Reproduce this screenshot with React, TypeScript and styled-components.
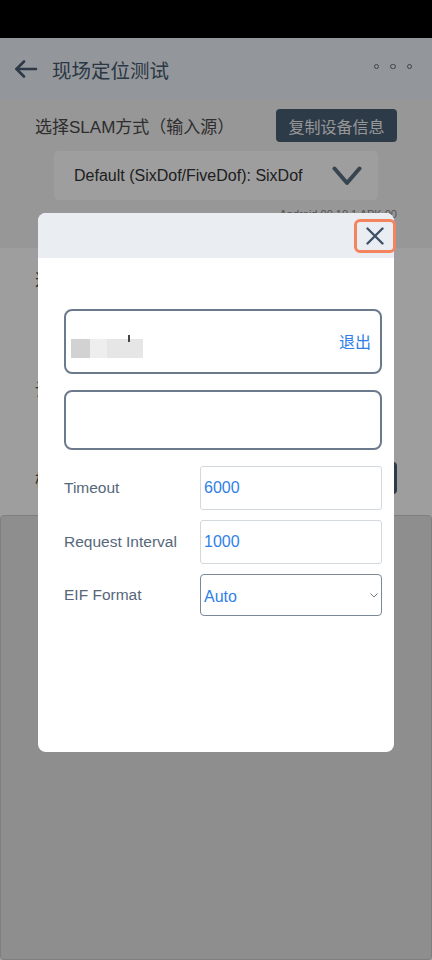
import styled, { createGlobalStyle } from 'styled-components';

const GlobalStyle = createGlobalStyle`
  html, body {
    margin: 0;
    padding: 0;
    background: #000;
  }
  body {
    font-family: "Liberation Sans", "Noto Sans CJK SC", Arial, sans-serif;
  }
`;

const fieldData = [
    { id: 1, label: 'Timeout', value: '6000' },
    { id: 2, label: 'Request Interval', value: '1000' },
];

const Page = styled.div`
  width: 432px;
  min-height: 960px;
  display: flex;
  flex-direction: column;
  background: #ffffff;
`;

const StatusBar = styled.div`
  height: 38px;
  background: #000;
`;

const Header = styled.div`
  height: 62px;
  background: #eef3f8;
  display: flex;
  align-items: center;
  padding: 0 20px 0 14px;
  box-sizing: border-box;
`;

const Title = styled.h1`
  margin: 0 0 0 14px;
  font-size: 19.5px;
  font-weight: 400;
  color: #46596e;
  font-family: "Noto Sans CJK SC", sans-serif;
  flex: 1;
`;

const Dots = styled.div`
  display: flex;
  gap: 11px;
  margin-top: -5px;
`;

const Dot = styled.span`
  width: 3.5px;
  height: 3.5px;
  border: 1.2px solid #5d6c7c;
  border-radius: 50%;
`;

const SlamSection = styled.section`
  height: 148px;
  background: #f4f4f4;
  padding: 9px 35px 0 35px;
  box-sizing: border-box;
`;

const SlamRow = styled.div`
  display: flex;
  align-items: center;
  justify-content: space-between;
  height: 33px;
`;

const SlamLabel = styled.span`
  font-size: 17px;
  color: #4b4b4b;
  font-family: "Liberation Sans", "Noto Sans CJK SC", sans-serif;
`;

const CopyButton = styled.button`
  height: 33px;
  width: 121px;
  border: none;
  border-radius: 4px;
  background: #4a6077;
  color: #f2f2f2;
  font-size: 16px;
  font-family: "Noto Sans CJK SC", sans-serif;
  padding: 0;
`;

const SlamSelect = styled.div`
  margin: 9px 0 0 19px;
  width: 324px;
  height: 49px;
  background: #ffffff;
  border-radius: 5px;
  display: flex;
  align-items: center;
  justify-content: space-between;
  padding: 0 16px 0 20px;
  box-sizing: border-box;
  font-size: 16px;
  color: #333;
`;

const Version = styled.div`
  margin: 8px 0 0 0;
  text-align: right;
  font-size: 11px;
  color: #888;
`;

const OptionsSection = styled.section`
  height: 267px;
  background: #ffffff;
  padding: 18px 35px 0 35px;
  box-sizing: border-box;
  display: flex;
  flex-direction: column;
`;

const OptionRow = styled.div<{ $top: number }>`
  margin-top: ${p => p.$top}px;
  height: 24px;
  display: flex;
  align-items: center;
  justify-content: space-between;
  font-size: 17px;
  color: #444;
  font-family: "Noto Sans CJK SC", sans-serif;
`;

const DarkButton = styled.span`
  width: 60px;
  height: 32px;
  border-radius: 4px;
  background: #4a6077;
`;

const LogPanel = styled.div`
  flex: 1;
  background: #e6e6e6;
  border: 1px solid #cdcdcd;
  border-radius: 4px;
`;

const Overlay = styled.div`
  position: fixed;
  inset: 0;
  top: 38px;
  background: rgba(0, 0, 0, 0.38);
  display: flex;
  justify-content: center;
  align-items: flex-start;
  padding-top: 175px;
  box-sizing: border-box;
`;

const Dialog = styled.div`
  width: 356px;
  height: 539px;
  background: #ffffff;
  border-radius: 8px;
`;

const DialogHead = styled.div`
  height: 45px;
  background: #eaeef3;
  border-radius: 8px 8px 0 0;
  display: flex;
  justify-content: flex-end;
  align-items: flex-start;
  padding-top: 6px;
  box-sizing: border-box;
`;

const CloseButton = styled.button`
  width: 42px;
  height: 34px;
  margin-right: -2px;
  border: 3px solid #f4845e;
  border-radius: 6px;
  background: transparent;
  display: flex;
  align-items: center;
  justify-content: center;
  padding: 0;
`;

const DialogBody = styled.div`
  padding: 51px 12px 0 26px;
  display: flex;
  flex-direction: column;
`;

const AccountBox = styled.div<{ $height: number; $top?: number }>`
  height: ${p => p.$height}px;
  margin-top: ${p => p.$top || 0}px;
  border: 2px solid #6b7b8d;
  border-radius: 8px;
  display: flex;
  align-items: center;
  justify-content: space-between;
  padding: 0 9px 0 5px;
  box-sizing: border-box;
`;

const Redacted = styled.div`
  display: flex;
  margin-top: 13px;
  height: 19px;
`;

const Blur = styled.span<{ $w: number; $c: string }>`
  position: relative;
  width: ${p => p.$w}px;
  background: ${p => p.$c};
`;

const Tick = styled.span`
  position: absolute;
  left: 21px;
  top: -4px;
  width: 1.5px;
  height: 7px;
  background: #444;
`;

const Logout = styled.span`
  font-size: 16px;
  color: #2f7fe8;
  font-family: "Noto Sans CJK SC", sans-serif;
  margin-top: -2px;
`;

const FieldRow = styled.div<{ $top: number }>`
  display: grid;
  grid-template-columns: 136px 1fr;
  align-items: center;
  margin-top: ${p => p.$top}px;
`;

const FieldLabel = styled.label`
  font-size: 15.5px;
  color: #56677a;
`;

const FieldInput = styled.input`
  height: 44px;
  border: 1px solid #d3d8dd;
  border-radius: 3px;
  padding: 0 3px;
  box-sizing: border-box;
  font-size: 16px;
  color: #2f7fe8;
  font-family: "Liberation Sans", Arial, sans-serif;
  outline: none;
  width: 100%;
`;

const SelectWrap = styled.div`
  position: relative;
  height: 42px;
`;

const FieldSelect = styled.select`
  appearance: none;
  -webkit-appearance: none;
  height: 42px;
  border: 1px solid #7b8898;
  border-radius: 4px;
  padding: 2px 0 0 3px;
  box-sizing: border-box;
  font-size: 16px;
  color: #2f7fe8;
  background: #fff;
  font-family: "Liberation Sans", Arial, sans-serif;
  width: 100%;
  outline: none;
`;

const SelectArrow = styled.svg`
  position: absolute;
  right: 4px;
  top: 19px;
  pointer-events: none;
`;

function BackArrow() {
    return (
        <svg width="24" height="24" viewBox="0 0 24 24" fill="none" stroke="#4a5d73" strokeWidth="2.6" strokeLinecap="round" strokeLinejoin="round">
            <path d="M22 12H2.5" />
            <path d="M10 4.5L2.5 12l7.5 7.5" />
        </svg>
    );
}

function BigChevron() {
    return (
        <svg width="30" height="20" viewBox="0 0 30 20" fill="none" stroke="#5c6f84" strokeWidth="4" strokeLinecap="round" strokeLinejoin="round">
            <path d="M2.5 2.5L15 17 27.5 2.5" />
        </svg>
    );
}

function CloseIcon() {
    return (
        <svg width="18" height="18" viewBox="0 0 18 18" fill="none" stroke="#3f5267" strokeWidth="2.4" strokeLinecap="round">
            <path d="M1.5 1.5l15 15M16.5 1.5l-15 15" />
        </svg>
    );
}

export default function App() {
    return (
        <>
            <GlobalStyle />
            <Page>
                <StatusBar />
                <Header>
                    <BackArrow />
                    <Title>现场定位测试</Title>
                    <Dots>
                        <Dot />
                        <Dot />
                        <Dot />
                    </Dots>
                </Header>

                <SlamSection>
                    <SlamRow>
                        <SlamLabel>选择SLAM方式（输入源）</SlamLabel>
                        <CopyButton>复制设备信息</CopyButton>
                    </SlamRow>
                    <SlamSelect>
                        <span>Default (SixDof/FiveDof): SixDof</span>
                        <BigChevron />
                    </SlamSelect>
                    <Version>Android 00.10.1 APK 00</Version>
                </SlamSection>

                <OptionsSection>
                    <OptionRow $top={0}>选择定位地图</OptionRow>
                    <OptionRow $top={86}>设置定位参数</OptionRow>
                    <OptionRow $top={66}>
                        <span>模式</span>
                        <DarkButton />
                    </OptionRow>
                </OptionsSection>

                <LogPanel />
            </Page>

            <Overlay>
                <Dialog>
                    <DialogHead>
                        <CloseButton aria-label="close">
                            <CloseIcon />
                        </CloseButton>
                    </DialogHead>
                    <DialogBody>
                        <AccountBox $height={65}>
                            <Redacted>
                                <Blur $w={19} $c="#d2d2d2" />
                                <Blur $w={17} $c="#eeeeee" />
                                <Blur $w={36} $c="#e6e6e6">
                                    <Tick />
                                </Blur>
                            </Redacted>
                            <Logout>退出</Logout>
                        </AccountBox>
                        <AccountBox $height={60} $top={16} />

                        {fieldData.map((item, i) => (
                            <FieldRow key={item.id} $top={i === 0 ? 16 : 10}>
                                <FieldLabel>{item.label}</FieldLabel>
                                <FieldInput defaultValue={item.value} />
                            </FieldRow>
                        ))}
                        <FieldRow $top={10}>
                            <FieldLabel>EIF Format</FieldLabel>
                            <SelectWrap>
                                <FieldSelect defaultValue="Auto">
                                    <option>Auto</option>
                                    <option>Manual</option>
                                </FieldSelect>
                                <SelectArrow width="8" height="5" viewBox="0 0 8 5" fill="none" stroke="#777" strokeWidth="1">
                                    <path d="M0.5 0.5L4 4 7.5 0.5" />
                                </SelectArrow>
                            </SelectWrap>
                        </FieldRow>
                    </DialogBody>
                </Dialog>
            </Overlay>
        </>
    );
}
